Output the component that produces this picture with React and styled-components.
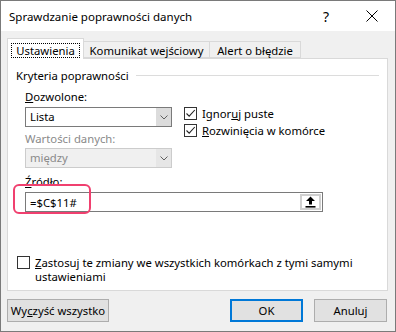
import styled, { createGlobalStyle } from "styled-components";

const Global = createGlobalStyle`
  html, body { margin: 0; padding: 0; background: #fff; }
  body { font-family: "Noto Sans", "Open Sans", sans-serif; font-size: 11.3px; color: #000; }
  * { box-sizing: border-box; }
`;

const Win = styled.div`
  width: 396px;
  height: 332px;
  border: 1px solid #7a7a7a;
  display: flex;
  flex-direction: column;
  background: #f0f0f0;
`;

const TitleBar = styled.div`
  height: 30px;
  background: #fff;
  display: flex;
  align-items: center;
  padding-left: 8px;
  font-size: 11.5px;
`;

const Title = styled.div`
  flex: 1;
`;

const TitleBtn = styled.div`
  width: 46px;
  height: 30px;
  display: flex;
  align-items: center;
  justify-content: center;
  font-size: 14px;
`;

const Body = styled.div`
  flex: 1;
  padding: 7px 7px 0 6px;
  display: flex;
  flex-direction: column;
`;

const TabStrip = styled.div`
  display: flex;
  align-items: flex-end;
  height: 20px;
`;

const Tab = styled.div`
  width: ${(p) => p.w}px;
  height: ${(p) => (p.active ? 21 : 17)}px;
  margin-left: ${(p) => (p.first ? 0 : -1)}px;
  margin-bottom: ${(p) => (p.active ? -1 : 0)}px;
  background: ${(p) => (p.active ? "#fff" : "#f0f0f0")};
  border: 1px solid #d9d9d9;
  border-bottom: ${(p) => (p.active ? "none" : "1px solid #d9d9d9")};
  position: relative;
  z-index: ${(p) => (p.active ? 2 : 1)};
  display: flex;
  align-items: center;
  justify-content: center;
  white-space: nowrap;
  padding-top: ${(p) => (p.active ? 2 : 1)}px;
`;

const Focus = styled.span`
  border: 1px dotted #000;
  padding: 0 4px;
  line-height: 13px;
`;

const Panel = styled.div`
  height: 233px;
  background: #fff;
  border: 1px solid #d9d9d9;
  padding: 8px 8px 0 8px;
  display: flex;
  flex-direction: column;
  position: relative;
  z-index: 1;
`;

const Group = styled.div`
  display: flex;
  align-items: center;
  gap: 7px;
  height: 16px;
`;

const GroupLine = styled.div`
  flex: 1;
  height: 1px;
  background: #dcdcdc;
`;

const Columns = styled.div`
  display: flex;
  padding-left: 9px;
  margin-top: 6px;
`;

const LeftCol = styled.div`
  width: 147px;
  display: flex;
  flex-direction: column;
`;

const RightCol = styled.div`
  padding-left: 12px;
  padding-top: 18px;
  display: flex;
  flex-direction: column;
  gap: 4px;
`;

const Label = styled.div`
  height: 16px;
  line-height: 16px;
  color: ${(p) => (p.disabled ? "#8a8a8a" : "#000")};
  margin-bottom: ${(p) => p.mb || 2}px;
`;

const Select = styled.div`
  height: 20px;
  border: 1px solid ${(p) => (p.disabled ? "#cccccc" : "#7a7a7a")};
  background: ${(p) => (p.disabled ? "#f0f0f0" : "#fff")};
  color: ${(p) => (p.disabled ? "#8a8a8a" : "#000")};
  display: flex;
  margin-bottom: ${(p) => p.mb || 0}px;
`;

const SelectText = styled.div`
  flex: 1;
  padding-left: 4px;
  line-height: 18px;
`;

const SelectArrow = styled.div`
  width: 15px;
  background: ${(p) => (p.disabled ? "#e6e6e6" : "#dcdcdc")};
  display: flex;
  align-items: center;
  justify-content: center;
`;

const CheckRow = styled.label`
  display: flex;
  align-items: flex-start;
  gap: 5px;
  line-height: 13px;
`;

const Box = styled.span`
  width: 13px;
  height: 13px;
  flex: none;
  border: 1px solid #333;
  background: #fff;
  display: flex;
  align-items: center;
  justify-content: center;
`;

const SourceWrap = styled.div`
  padding-left: 9px;
  margin-top: 6px;
  position: relative;
`;

const Input = styled.div`
  width: 298px;
  height: 20px;
  border: 1px solid #7a7a7a;
  display: flex;
  align-items: center;
  justify-content: space-between;
  padding: 0 1px 0 4px;
`;

const PickBtn = styled.div`
  width: 21px;
  height: 16px;
  border: 2px solid #cfcfcf;
  background: #fff;
  display: flex;
  align-items: center;
  justify-content: center;
`;

const Highlight = styled.div`
  position: absolute;
  left: -3px;
  top: 10px;
  width: 78px;
  height: 30px;
  border: 2px solid #f0406f;
  border-radius: 6px;
  pointer-events: none;
`;

const ApplyRow = styled(CheckRow)`
  margin-top: 44px;
  padding-left: 1px;
  width: 350px;
  line-height: 14px;
`;

const Buttons = styled.div`
  display: flex;
  align-items: center;
  margin-top: 8px;
  height: 23px;
`;

const Btn = styled.button`
  font: inherit;
  color: #000;
  height: 23px;
  width: ${(p) => p.w}px;
  margin-left: ${(p) => p.ml || 0}px;
  background: #e1e1e1;
  border: ${(p) => (p.primary ? "2px solid #0078d7" : "1px solid #adadad")};
  padding: 0;
  white-space: nowrap;
  display: flex;
  align-items: center;
  justify-content: center;
`;

const Chevron = () => (
  <svg width="8" height="5" viewBox="0 0 8 5">
    <path d="M0.5 0.5 L4 4 L7.5 0.5" fill="none" stroke="#606060" strokeWidth="1" />
  </svg>
);

const Tick = () => (
  <svg width="11" height="11" viewBox="0 0 11 11">
    <path d="M1.5 5.5 L4.2 8.2 L9.8 2" fill="none" stroke="#222" strokeWidth="1.1" />
  </svg>
);

const UpIcon = () => (
  <svg width="11" height="12" viewBox="0 0 11 12">
    <path d="M5.5 0.5 L10 5 L7 5 L7 8.5 L4 8.5 L4 5 L1 5 Z" fill="#000" />
    <rect x="0.5" y="10" width="10" height="1.6" fill="#000" />
  </svg>
);

export default function App() {
  return (
    <>
      <Global />
      <Win>
        <TitleBar>
          <Title>Sprawdzanie poprawności danych</Title>
          <TitleBtn>?</TitleBtn>
          <TitleBtn>
            <svg width="12" height="12" viewBox="0 0 12 12">
              <path d="M0.5 0.5 L11.5 11.5 M11.5 0.5 L0.5 11.5" stroke="#000" strokeWidth="1" />
            </svg>
          </TitleBtn>
        </TitleBar>
        <Body>
          <TabStrip>
            <Tab first active w={77}>
              <Focus>Ustawienia</Focus>
            </Tab>
            <Tab w={127}>Komunikat wejściowy</Tab>
            <Tab w={92}>Alert o błędzie</Tab>
          </TabStrip>
          <Panel>
            <Group>
              <span>Kryteria poprawności</span>
              <GroupLine />
            </Group>
            <Columns>
              <LeftCol>
                <Label>
                  <u>D</u>ozwolone:
                </Label>
                <Select mb={4}>
                  <SelectText>Lista</SelectText>
                  <SelectArrow>
                    <Chevron />
                  </SelectArrow>
                </Select>
                <Label disabled mb={1}>Wartości danych:</Label>
                <Select disabled>
                  <SelectText>między</SelectText>
                  <SelectArrow disabled>
                    <Chevron />
                  </SelectArrow>
                </Select>
              </LeftCol>
              <RightCol>
                <CheckRow>
                  <Box>
                    <Tick />
                  </Box>
                  <span>
                    Ignor<u>u</u>j puste
                  </span>
                </CheckRow>
                <CheckRow>
                  <Box>
                    <Tick />
                  </Box>
                  <span>
                    <u>R</u>ozwinięcia w komórce
                  </span>
                </CheckRow>
              </RightCol>
            </Columns>
            <SourceWrap>
              <Label>
                <u>Ź</u>ródło:
              </Label>
              <Input>
                <span>=$C$11#</span>
                <PickBtn>
                  <UpIcon />
                </PickBtn>
              </Input>
              <Highlight />
            </SourceWrap>
            <ApplyRow>
              <Box />
              <span>
                <u>Z</u>astosuj te zmiany we wszystkich komórkach z tymi samymi ustawieniami
              </span>
            </ApplyRow>
          </Panel>
          <Buttons>
            <Btn w={102}>
              Wy<u>c</u>zyść wszystko
            </Btn>
            <Btn primary w={73} ml={121}>
              OK
            </Btn>
            <Btn w={73} ml={11}>
              Anuluj
            </Btn>
          </Buttons>
        </Body>
      </Win>
    </>
  );
}
